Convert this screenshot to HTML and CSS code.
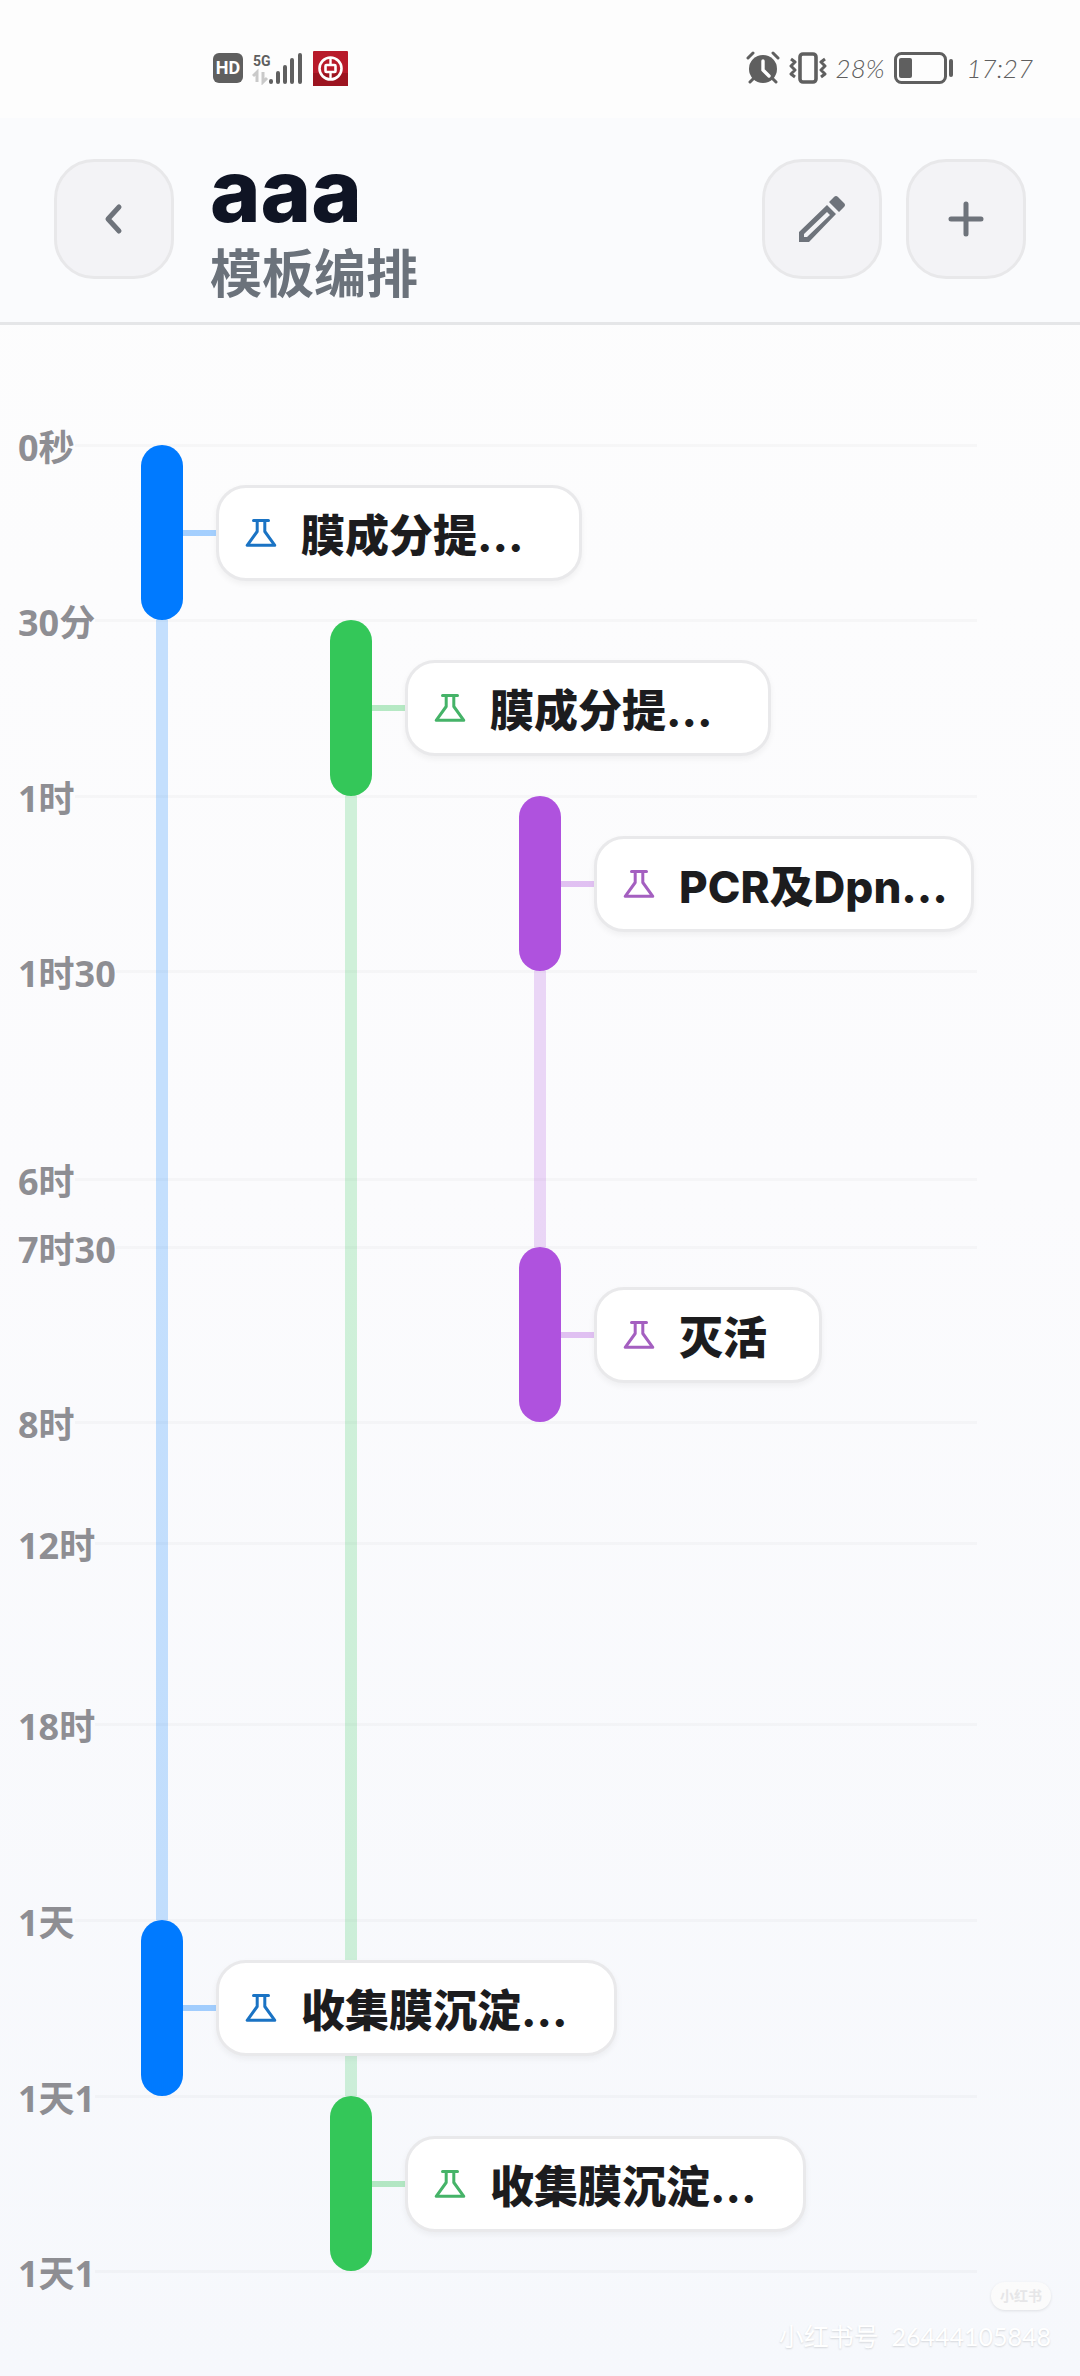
FILE: index.html
```html
<!DOCTYPE html>
<html lang="zh-CN">
<head>
  <meta charset="utf-8">
  <meta name="viewport" content="width=device-width, initial-scale=1">
  <title>模板编排</title>
  <link rel="stylesheet" href="styles.css">
</head>
<body>
  <svg class="sprite" aria-hidden="true">
    <symbol id="flask" viewBox="0 0 32 28">
      <path d="M8.5 1.5h15M12.2 2v10.5L2.2 26.3h27.6L19.8 12.5V2" fill="none" stroke="currentColor" stroke-width="3" stroke-linecap="round" stroke-linejoin="round"/>
    </symbol>
  </svg>

  <div class="status-bar">
    <div class="status-group">
      <span class="hd">HD</span>
      <svg class="signal" width="52" height="34" viewBox="0 0 52 34" aria-hidden="true">
        <text class="signal-text" x="1" y="15">5G</text>
        <path d="M5 31V21l-4 4M11 21v10l4-4" fill="none" stroke="#c9c9c9" stroke-width="3"/>
        <path d="M19 31v-1M26 31v-9M33 31V16M40 31V9M48 31V4" stroke="#5f5f5f" stroke-width="4" stroke-linecap="round"/>
      </svg>
      <svg width="35" height="35" viewBox="0 0 35 35" aria-hidden="true">
        <rect width="35" height="35" rx="1" fill="#b81a2a"/>
        <rect y="22" width="35" height="13" fill="#9c1420"/>
        <circle cx="17.5" cy="17.5" r="11" fill="none" stroke="#fff" stroke-width="2.6"/>
        <rect x="12.5" y="14" width="10" height="7" rx="1" fill="none" stroke="#fff" stroke-width="2.6"/>
        <path d="M17.5 6v8M17.5 21v8" stroke="#fff" stroke-width="2.4"/>
      </svg>
    </div>
    <div class="status-group">
      <svg width="34" height="34" viewBox="0 0 34 34" aria-hidden="true">
        <circle cx="17" cy="18" r="14" fill="#5f5f5f"/>
        <path d="M2 7l5-5M32 7l-5-5M7 28l-3 3M27 28l3 3" stroke="#5f5f5f" stroke-width="3" stroke-linecap="round"/>
        <path d="M17 10v9l6 6" fill="none" stroke="#fff" stroke-width="3.4" stroke-linecap="round"/>
      </svg>
      <svg width="38" height="34" viewBox="0 0 38 34" aria-hidden="true">
        <rect x="11" y="3" width="16" height="28" rx="3" fill="none" stroke="#5f5f5f" stroke-width="3.6"/>
        <path d="M2 8l4 3-4 4 4 4-4 4 4 3M36 8l-4 3 4 4-4 4 4 4-4 3" fill="none" stroke="#5f5f5f" stroke-width="3" stroke-linejoin="round"/>
      </svg>
      <span class="status-text">28%</span>
      <svg class="battery" width="60" height="34" viewBox="0 0 60 34" aria-hidden="true">
        <rect x="1.5" y="2.5" width="50" height="29" rx="6" fill="none" stroke="#5f5f5f" stroke-width="3"/>
        <rect x="5" y="7" width="13" height="20" rx="2" fill="#5f5f5f"/>
        <path d="M57 10v14" stroke="#5f5f5f" stroke-width="4" stroke-linecap="round"/>
      </svg>
      <span class="status-text">17:27</span>
    </div>
  </div>

  <header class="header">
    <button class="icon-button" type="button" aria-label="返回">
      <svg width="48" height="48" viewBox="0 0 48 48"><path d="M29 12L18 24l11 12" fill="none" stroke="currentColor" stroke-width="5" stroke-linecap="round" stroke-linejoin="round"/></svg>
    </button>
    <div class="heading">
      <h1>aaa</h1>
      <p>模板编排</p>
    </div>
    <button class="icon-button" type="button" aria-label="编辑">
      <svg width="48" height="48" viewBox="0 0 48 48"><path fill="currentColor" fill-rule="evenodd" d="M1 47v-10L29 10l9 9L11 47zM6 39v3h3L32 20l-3-3zM31 7l5-5q2-2 4 0l6 6q2 2 0 4l-5 5z"/></svg>
    </button>
    <button class="icon-button" type="button" aria-label="添加">
      <svg width="48" height="48" viewBox="0 0 48 48"><path d="M24 9v30M9 24h30" stroke="currentColor" stroke-width="5" stroke-linecap="round"/></svg>
    </button>
  </header>

  <main class="timeline">
    <div class="tick row-1"><span>0秒</span></div>
    <div class="tick row-2"><span>30分</span></div>
    <div class="tick row-3"><span>1时</span></div>
    <div class="tick row-4"><span>1时30</span></div>
    <div class="tick row-5"><span>6时</span></div>
    <div class="tick row-6"><span>7时30</span></div>
    <div class="tick row-7"><span>8时</span></div>
    <div class="tick row-8"><span>12时</span></div>
    <div class="tick row-9"><span>18时</span></div>
    <div class="tick row-10"><span>1天</span></div>
    <div class="tick row-11"><span>1天1</span></div>
    <div class="tick row-12"><span>1天1</span></div>

    <div class="track blue span-2-10"></div>
    <div class="track green span-3-11"></div>
    <div class="track purple span-4-6"></div>

    <div class="task blue row-1">
      <span class="bar"></span>
      <button class="card" type="button" style="width: 366px"><svg class="flask"><use href="#flask"/></svg>膜成分提…</button>
    </div>
    <div class="task green row-2">
      <span class="bar"></span>
      <button class="card" type="button" style="width: 366px"><svg class="flask"><use href="#flask"/></svg>膜成分提…</button>
    </div>
    <div class="task purple row-3">
      <span class="bar"></span>
      <button class="card" type="button" style="width: 380px"><svg class="flask"><use href="#flask"/></svg>PCR及Dpn…</button>
    </div>
    <div class="task purple row-6">
      <span class="bar"></span>
      <button class="card" type="button" style="width: 228px"><svg class="flask"><use href="#flask"/></svg>灭活</button>
    </div>
    <div class="task blue row-10">
      <span class="bar"></span>
      <button class="card" type="button" style="width: 401px"><svg class="flask"><use href="#flask"/></svg>收集膜沉淀…</button>
    </div>
    <div class="task green row-11">
      <span class="bar"></span>
      <button class="card" type="button" style="width: 401px"><svg class="flask"><use href="#flask"/></svg>收集膜沉淀…</button>
    </div>
  </main>

  <div class="watermark">
    <span class="badge">小红书</span>
    <span>小红书号&nbsp; 26444105848</span>
  </div>
</body>
</html>
```

FILE: styles.css
```css
* {
  box-sizing: border-box;
}

body {
  position: relative;
  min-height: 100vh;
  margin: 0;
  background: linear-gradient(#fdfdfd, #fbfbfd 50%, #f6f8fc);
  color: #1c1c1e;
  font-family: Inter, "Noto Sans CJK SC", sans-serif;
}

.sprite {
  display: none;
}

/* Status bar */
.status-bar {
  display: flex;
  align-items: center;
  justify-content: space-between;
  height: 118px;
  padding: 18px 47px 0 213px;
  background: #fdfdfd;
}

.status-group {
  display: flex;
  align-items: center;
  gap: 9px;
}

.hd {
  width: 30px;
  border-radius: 6px;
  background: #5f5f5f;
  color: #fff;
  font: 700 18px/30px Roboto, sans-serif;
  text-align: center;
}

.signal-text {
  fill: #5f5f5f;
  font: 700 14px Roboto, sans-serif;
}

.status-text {
  color: #5f5f5f;
  font-family: Lato, sans-serif;
  font-size: 26px;
  font-style: italic;
  font-weight: 300;
}

.battery {
  margin-right: 4px;
}

/* Header */
.header {
  display: flex;
  align-items: center;
  gap: 24px;
  height: 207px;
  padding: 0 54px 3px;
  border-bottom: 3px solid #e5e6e8;
  background: #fafbfd;
}

.icon-button {
  display: flex;
  align-items: center;
  justify-content: center;
  width: 120px;
  height: 120px;
  padding: 0;
  border: 3px solid #e8e8ea;
  border-radius: 40px;
  background: #f3f3f6;
  color: #6e737b;
}

.heading {
  flex: 1;
  padding: 24px 0 0 12px;
}

.heading h1 {
  margin: 0;
  color: #0f1424;
  font-size: 86px;
  font-weight: 800;
  line-height: 80px;
}

.heading p {
  margin: 8px 0 0;
  color: #6b727b;
  font-size: 52px;
  font-weight: 700;
  line-height: 72px;
}

/* Timeline: one grid row per interval, one column per lane */
.timeline {
  display: grid;
  grid-template-columns: 123px 189px 189px 1fr;
  grid-template-rows: 175px 176px 175px 208px 68px 175px 121px 181px 196px 176px 175px 48px;
  padding: 120px 103px 48px 18px;
}

.tick {
  display: flex;
  align-items: center;
  grid-column: 1 / -1;
  align-self: start;
  height: 54px;
  margin-top: -27px;
  color: #8e8e93;
  font-family: "Noto Sans", "Noto Sans CJK SC", sans-serif;
  font-size: 36px;
  font-weight: 700;
  line-height: 48px;
}

.tick span {
  padding-top: 6px;
}

.tick::after {
  flex: 1;
  height: 3px;
  background: rgba(0, 0, 0, 0.025);
  content: "";
}

.track {
  justify-self: start;
  width: 12px;
  margin-left: 15px;
  background: currentColor;
  opacity: 0.22;
}

.blue {
  grid-column: 2 / -1;
  color: #007aff;
  --icon: #1a73c4;
}

.green {
  grid-column: 3 / -1;
  color: #34c759;
  --icon: #45b368;
}

.purple {
  grid-column: 4 / -1;
  color: #af52de;
  --icon: #a45fc0;
}

.task {
  z-index: 1;
  display: flex;
  align-items: center;
}

.bar {
  align-self: stretch;
  width: 42px;
  border-radius: 21px;
  background: currentColor;
}

/* Connector between the bar and its card */
.bar::after {
  display: block;
  width: 33px;
  height: 6px;
  margin: 85px 0 0 42px;
  background: currentColor;
  opacity: 0.35;
  content: "";
}

.card {
  display: flex;
  flex: none;
  align-items: center;
  height: 96px;
  margin-left: 33px;
  padding: 0 0 0 26px;
  border: 3px solid #e9e9eb;
  border-radius: 30px;
  background: #fff;
  box-shadow: 0 3px 6px rgba(0, 0, 0, 0.05);
  color: #1c1c1e;
  font-family: inherit;
  font-size: 44px;
  font-weight: 800;
  white-space: nowrap;
}

.flask {
  flex: none;
  width: 32px;
  height: 28px;
  margin-right: 24px;
  color: var(--icon);
}

.row-1 { grid-row: 1; }
.row-2 { grid-row: 2; }
.row-3 { grid-row: 3; }
.row-4 { grid-row: 4; }
.row-5 { grid-row: 5; }
.row-6 { grid-row: 6; }
.row-7 { grid-row: 7; }
.row-8 { grid-row: 8; }
.row-9 { grid-row: 9; }
.row-10 { grid-row: 10; }
.row-11 { grid-row: 11; }
.row-12 { grid-row: 12; }

.span-2-10 { grid-row: 2 / 10; }
.span-3-11 { grid-row: 3 / 11; }
.span-4-6 { grid-row: 4 / 6; }

/* Watermark */
.watermark {
  position: absolute;
  right: 29px;
  bottom: 20px;
  display: flex;
  flex-direction: column;
  align-items: flex-end;
  gap: 6px;
  color: #fff;
  font-family: Lato, "Noto Sans CJK SC", sans-serif;
  font-size: 25px;
  line-height: 40px;
  text-shadow: 0 1px 2px rgba(0, 0, 0, 0.14);
}

.badge {
  padding: 0 9px;
  border-radius: 14px;
  background: #fbfbfb;
  box-shadow: 0 1px 3px rgba(0, 0, 0, 0.1);
  color: #e6e6e8;
  font-size: 14px;
  font-weight: 700;
  line-height: 28px;
  text-shadow: none;
}
```
